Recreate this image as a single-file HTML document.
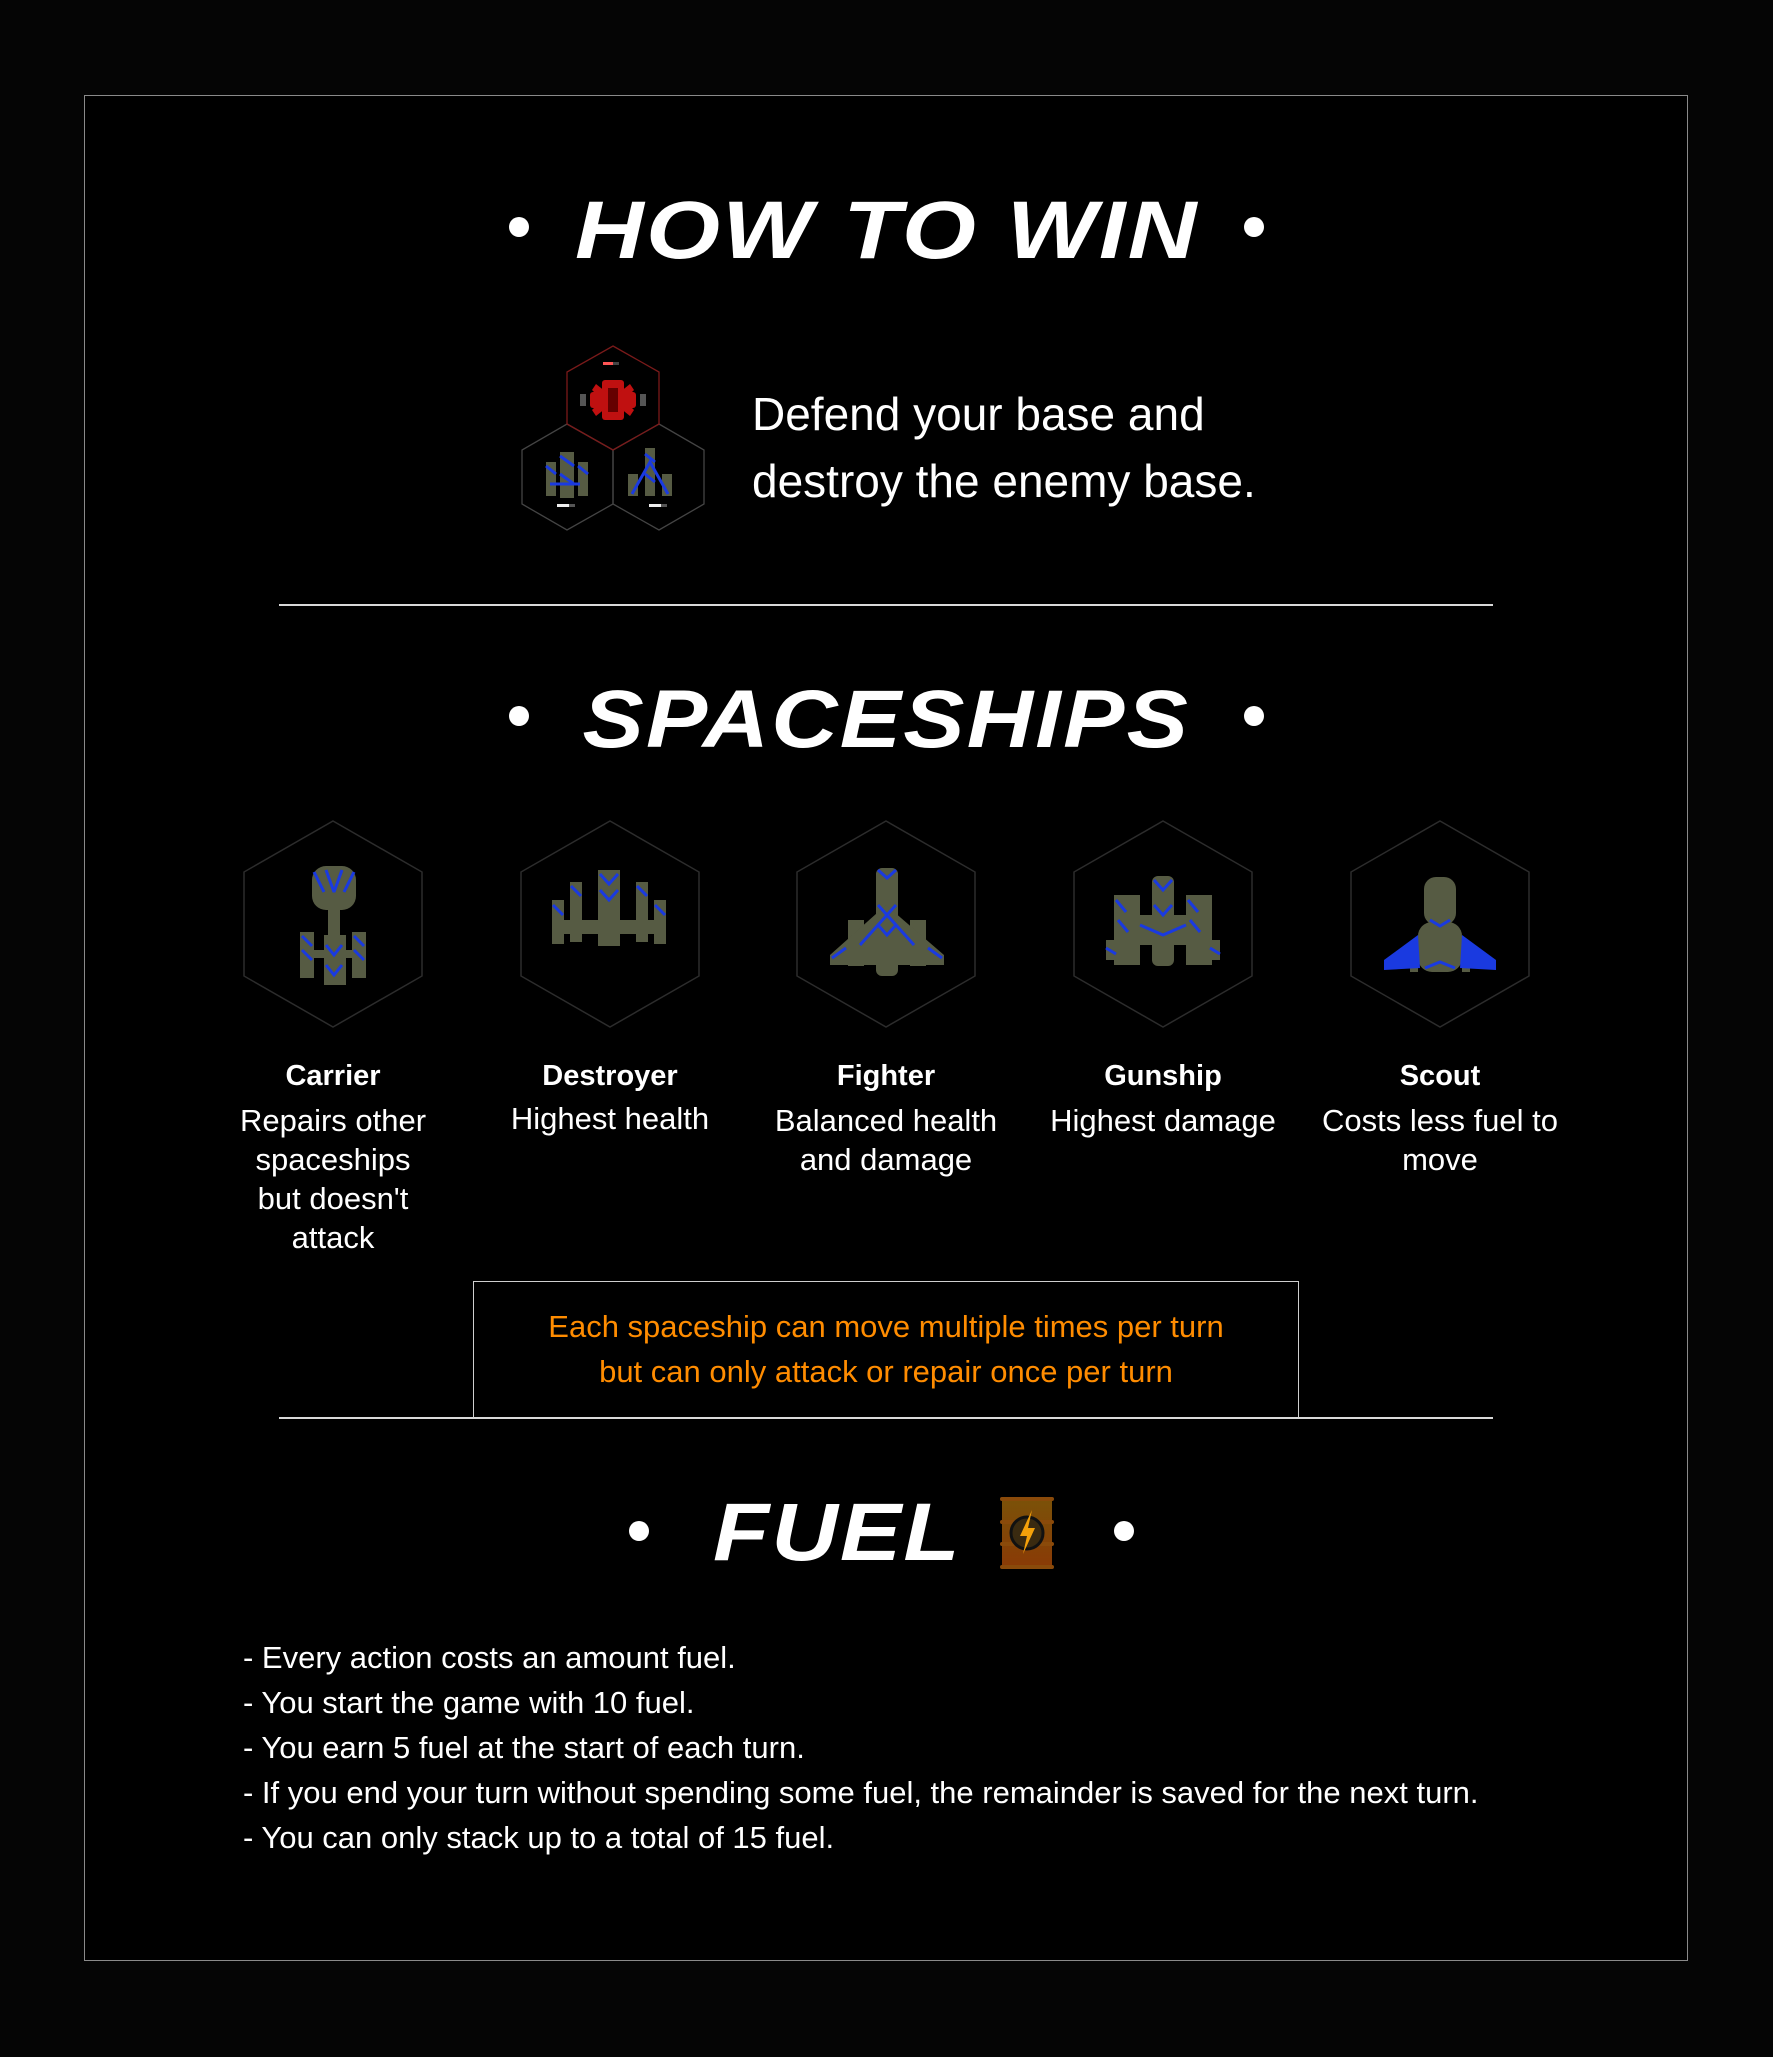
<!DOCTYPE html>
<html><head><meta charset="utf-8">
<style>
html,body{margin:0;padding:0;background:#050505;}
body{width:1773px;height:2057px;position:relative;overflow:hidden;font-family:"Liberation Sans",sans-serif;color:#fff;}
.frame{position:absolute;left:84px;top:95px;width:1604px;height:1866px;border:1.5px solid #8a8a8a;background:#000;box-sizing:border-box;}
.abs{position:absolute;}
.title{position:absolute;left:0;width:1773px;text-align:center;font-weight:bold;font-style:italic;font-size:82px;line-height:82px;}
.title span{display:inline-block;transform:scaleX(1.16);letter-spacing:2px;}
.dot{position:absolute;width:20px;height:20px;border-radius:50%;background:#fff;}
.hr{position:absolute;left:279px;width:1214px;height:2px;background:#d8d8d8;}
.name{position:absolute;width:270px;text-align:center;font-weight:bold;font-size:29px;}
.desc{position:absolute;width:270px;text-align:center;font-size:31px;line-height:39px;}
.list{position:absolute;left:243px;top:1635px;font-size:31px;line-height:45px;}
</style></head><body>
<div class="frame"></div>

<div class="dot" style="left:509px;top:217px"></div>
<div class="dot" style="left:1244px;top:217px"></div>
<div class="title" style="top:190px"><span>HOW TO WIN</span></div>

<svg class="abs" style="left:520px;top:344px" width="190" height="190" viewBox="0 0 190 190">
 <g fill="none" stroke-width="1.3">
  <polygon points="47,80 93,106 93,160 47,186 2,160 2,106" stroke="#444"/>
  <polygon points="139,80 184,106 184,160 139,186 93,160 93,106" stroke="#444"/>
  <polygon points="93,2 139,28 139,80 93,106 47,80 47,28" stroke="#7a1a1a"/>
 </g>
 <rect x="83" y="18" width="10" height="3" fill="#f55"/><rect x="93" y="18" width="6" height="3" fill="#444"/>
 <g fill="#c01010">
  <rect x="82" y="36" width="22" height="40" rx="3"/>
  <rect x="70" y="48" width="46" height="16" rx="3"/>
  <rect x="60" y="50" width="6" height="12" fill="#555"/><rect x="120" y="50" width="6" height="12" fill="#555"/>
  <path d="M76 40 L86 48 L80 54 L72 46Z"/><path d="M110 40 L100 48 L106 54 L114 46Z"/>
  <path d="M76 72 L86 64 L80 58 L72 66Z"/><path d="M110 72 L100 64 L106 58 L114 66Z"/>
 </g>
 <rect x="88" y="44" width="10" height="24" fill="#600"/>
 <g>
  <rect x="26" y="118" width="10" height="34" fill="#565b43"/><rect x="58" y="118" width="10" height="34" fill="#565b43"/>
  <rect x="40" y="108" width="14" height="46" fill="#565b43"/>
  <path d="M26 122 l10 8 M58 122 l10 8 M40 112 l14 10 M40 130 l14 10 M30 140 l30 0" stroke="#1a3ae0" stroke-width="3"/>
  <rect x="37" y="160" width="12" height="3" fill="#eee"/><rect x="49" y="160" width="6" height="3" fill="#555"/>
  <rect x="125" y="104" width="10" height="48" fill="#565b43"/>
  <rect x="108" y="130" width="10" height="22" fill="#565b43"/><rect x="142" y="130" width="10" height="22" fill="#565b43"/>
  <path d="M112 150 L130 118 L148 150" fill="none" stroke="#1a3ae0" stroke-width="3"/>
  <path d="M125 110 l10 8 M125 130 l10 8" stroke="#1a3ae0" stroke-width="3"/>
  <rect x="129" y="160" width="12" height="3" fill="#eee"/><rect x="141" y="160" width="6" height="3" fill="#555"/>
 </g>
</svg>
<div class="abs" style="left:752px;top:381px;font-size:46px;line-height:67px;">Defend your base and<br>destroy the enemy base.</div>

<div class="hr" style="top:604px"></div>

<div class="dot" style="left:509px;top:706px"></div>
<div class="dot" style="left:1244px;top:706px"></div>
<div class="title" style="top:679px"><span style="transform:scaleX(1.12)">SPACESHIPS</span></div>

<svg class="abs" style="left:0;top:0" width="1773" height="1100">
 <defs>
  <polygon id="hx" points="0,-103 89,-52 89,52 0,103 -89,52 -89,-52" fill="none" stroke="#2c2c2c" stroke-width="1.5"/>
 </defs>
 <use href="#hx" x="333" y="924"/><use href="#hx" x="610" y="924"/><use href="#hx" x="886" y="924"/><use href="#hx" x="1163" y="924"/><use href="#hx" x="1440" y="924"/>
 <g fill="#565b43" stroke="none">
  <rect x="312" y="866" width="44" height="44" rx="14"/>
  <rect x="328" y="905" width="12" height="30"/>
  <rect x="300" y="932" width="14" height="46"/><rect x="352" y="932" width="14" height="46"/>
  <rect x="324" y="935" width="22" height="50"/>
  <rect x="314" y="950" width="44" height="8"/>
  <rect x="552" y="900" width="12" height="44"/><rect x="570" y="882" width="12" height="60"/>
  <rect x="598" y="870" width="22" height="76"/>
  <rect x="636" y="882" width="12" height="60"/><rect x="654" y="900" width="12" height="44"/>
  <rect x="552" y="920" width="114" height="14"/>
  <rect x="876" y="868" width="22" height="108" rx="6"/>
  <rect x="848" y="920" width="16" height="46"/><rect x="910" y="920" width="16" height="46"/>
  <path d="M830 955 L886 905 L944 955 L944 965 L830 965Z"/>
  <rect x="1152" y="876" width="22" height="90" rx="6"/>
  <rect x="1114" y="895" width="26" height="70"/><rect x="1186" y="895" width="26" height="70"/>
  <rect x="1106" y="940" width="18" height="20"/><rect x="1202" y="940" width="18" height="20"/>
  <rect x="1130" y="915" width="66" height="30"/>
  <rect x="1424" y="877" width="32" height="48" rx="12"/>
  <rect x="1418" y="922" width="44" height="50" rx="14"/>
  <rect x="1410" y="950" width="8" height="22"/><rect x="1462" y="950" width="8" height="22"/>
 </g>
 <g stroke="#1a3ae0" stroke-width="3" fill="none">
  <path d="M314 872 l10 20 M326 870 l8 22 M342 870 l-8 22 M354 872 l-10 20"/>
  <path d="M302 936 l10 10 M302 950 l10 10 M354 936 l10 10 M354 950 l10 10 M326 945 l8 10 l8 -10 M326 965 l8 10 l8 -10"/>
  <path d="M600 874 l9 10 l9 -10 M600 890 l9 10 l9 -10 M571 886 l10 10 M637 886 l10 10 M553 905 l10 10 M655 905 l10 10"/>
  <path d="M878 870 l9 8 l9 -8 M878 905 l9 10 l9 -10 M878 925 l9 10 l9 -10 M860 945 l27 -30 l27 30 M832 958 l14 -10 M942 958 l-14 -10"/>
  <path d="M1154 880 l9 10 l9 -10 M1154 905 l9 10 l9 -10 M1116 900 l10 12 M1118 920 l10 12 M1188 900 l10 12 M1190 920 l10 12 M1140 925 l23 10 l23 -10 M1106 948 l10 6 M1210 948 l10 6"/>
  <path d="M1430 920 l10 6 l10 -6 M1425 968 l15 -6 l15 6"/>
 </g>
 <g fill="#1a3ae0">
  <path d="M1418 935 L1384 960 L1384 970 L1420 968Z"/><path d="M1462 935 L1496 960 L1496 970 L1460 968Z"/>
 </g>
</svg>

<div class="name" style="left:198px;top:1060px">Carrier</div>
<div class="desc" style="left:198px;top:1101px">Repairs other<br>spaceships<br>but doesn't<br>attack</div>
<div class="name" style="left:475px;top:1060px">Destroyer</div>
<div class="desc" style="left:475px;top:1099px">Highest health</div>
<div class="name" style="left:751px;top:1060px">Fighter</div>
<div class="desc" style="left:751px;top:1101px">Balanced health<br>and damage</div>
<div class="name" style="left:1028px;top:1060px">Gunship</div>
<div class="desc" style="left:1028px;top:1101px">Highest damage</div>
<div class="name" style="left:1305px;top:1060px">Scout</div>
<div class="desc" style="left:1305px;top:1101px">Costs less fuel to<br>move</div>

<div class="abs" style="left:473px;top:1281px;width:826px;height:137px;border:1.5px solid #cfcfcf;border-bottom:none;box-sizing:border-box;"></div>
<div class="abs" style="left:473px;top:1304px;width:826px;text-align:center;color:#ff8c00;font-size:31px;line-height:45px;">Each spaceship can move multiple times per turn<br>but can only attack or repair once per turn</div>

<div class="hr" style="top:1417px"></div>

<div class="dot" style="left:629px;top:1521px"></div>
<div class="dot" style="left:1114px;top:1521px"></div>
<div class="abs" style="left:713px;top:1492px;font-weight:bold;font-style:italic;font-size:82px;line-height:82px"><span style="display:inline-block;transform:scaleX(1.12);transform-origin:left;letter-spacing:2px">FUEL</span></div>
<svg class="abs" style="left:998px;top:1496px" width="58" height="74" viewBox="0 0 58 74">
 <defs><linearGradient id="g" x1="0" y1="0" x2="0" y2="1"><stop offset="0" stop-color="#7a5208"/><stop offset="1" stop-color="#8a3a06"/></linearGradient></defs>
 <rect x="4" y="2" width="50" height="70" fill="url(#g)"/>
 <g fill="#8a4a0a"><rect x="2" y="1" width="54" height="4" rx="2"/><rect x="2" y="24" width="54" height="4" rx="2"/><rect x="2" y="46" width="54" height="4" rx="2"/><rect x="2" y="69" width="54" height="4" rx="2"/></g>
 <circle cx="29" cy="37" r="16" fill="#3a2a10" stroke="#111" stroke-width="3"/>
 <path d="M34 14 L22 40 L29 40 L25 58 L37 32 L30 32Z" fill="#f5a10a"/>
</svg>

<div class="list">- Every action costs an amount fuel.<br>- You start the game with 10 fuel.<br>- You earn 5 fuel at the start of each turn.<br>- If you end your turn without spending some fuel, the remainder is saved for the next turn.<br>- You can only stack up to a total of 15 fuel.</div>
</body></html>
